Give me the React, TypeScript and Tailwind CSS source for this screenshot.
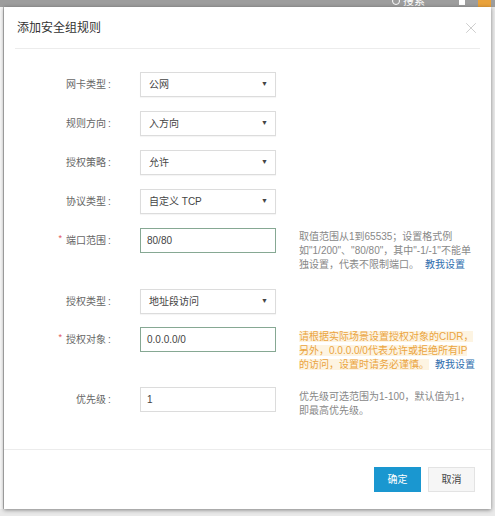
import { X } from "lucide-react";

const font = { fontFamily: '"Liberation Sans", "Noto Sans CJK SC", sans-serif' };

const Label = ({ text, required }: { text: string; required?: boolean }) => (
  <div className="w-[118px] shrink-0 h-[25px] flex items-center justify-end pr-[2px] text-[10px] text-[#666]">
    {required && <span className="text-[#e0535b] text-[9px] mr-[4px] -mt-[3px]">*</span>}
    <span>{text}</span>
    <span className="w-[14px] text-left pl-[2px]">:</span>
  </div>
);

const Select = ({ value }: { value: string }) => (
  <div className="ml-[18px] w-[136px] h-[25px] shrink-0 border border-[#dcdcdc] bg-white flex items-center justify-between pl-[8px] pr-[7px] text-[10px] text-[#444] shadow-[0_1px_1px_rgba(0,0,0,0.04)]">
    <span>{value}</span>
    <span className="text-[7px] text-[#444]">▼</span>
  </div>
);

const Input = ({ value, green }: { value: string; green?: boolean }) => (
  <div
    className={`ml-[18px] w-[136px] h-[25px] shrink-0 border bg-white flex items-center pl-[6px] text-[10px] text-[#444] ${
      green ? "border-[#86a893]" : "border-[#dcdcdc]"
    }`}
  >
    {value}
  </div>
);

export default function App() {
  return (
    <div className="relative w-[495px] h-[516px] bg-[#e9e9e9] overflow-hidden" style={font}>
      {/* page behind the dialog */}
      <div className="h-[7px] bg-[#9d9d9d] relative overflow-hidden">
        <div className="absolute right-[70px] top-[-5px] flex items-center gap-[3px] text-[11px] leading-[12px] text-white">
          <span className="w-[8px] h-[8px] rounded-full border border-white" />
          <span>搜索</span>
        </div>
        <div className="absolute right-[30px] top-[-4px] w-[6px] h-[9px] rounded-t-full bg-white" />
        <div className="absolute right-[4px] top-0 w-[13px] h-[7px] bg-[#e9a23b]" />
      </div>
      <div className="absolute left-0 top-[7px] w-[4px] h-[502px] bg-[#f7f7f7] border-r border-[#bdbdbd]" />

      {/* dialog */}
      <div className="absolute left-[4px] top-[7px] w-[487px] h-[502px] bg-white shadow-[0_1px_4px_rgba(0,0,0,0.45)] flex flex-col">
        <div className="h-[41px] flex items-center justify-between pl-[13px] pr-[11px]">
          <span className="text-[12px] text-[#333]">添加安全组规则</span>
          <X className="w-[18px] h-[18px] text-[#c4c4c4]" strokeWidth={1.1} />
        </div>
        <div className="mx-[11px] h-px bg-[#ececec]" />

        <div className="h-[400px] flex flex-col">
          <div className="flex mt-[23px]">
            <Label text="网卡类型" />
            <Select value="公网" />
          </div>
          <div className="flex mt-[14px]">
            <Label text="规则方向" />
            <Select value="入方向" />
          </div>
          <div className="flex mt-[14px]">
            <Label text="授权策略" />
            <Select value="允许" />
          </div>
          <div className="flex mt-[14px]">
            <Label text="协议类型" />
            <Select value="自定义 TCP" />
          </div>
          <div className="flex items-start mt-[14px]">
            <Label text="端口范围" required />
            <Input value="80/80" green />
            <p className="ml-[23px] mt-[2px] w-[178px] text-[10px] leading-[14px] text-[#888]">
              取值范围从1到65535；设置格式例如"1/200"、"80/80"，其中"-1/-1"不能单独设置，代表不限制端口。
              <span className="inline-block ml-[6px] text-[#2f6eae]">教我设置</span>
            </p>
          </div>
          <div className="flex mt-[17px]">
            <Label text="授权类型" />
            <Select value="地址段访问" />
          </div>
          <div className="flex items-start mt-[13px]">
            <Label text="授权对象" required />
            <Input value="0.0.0.0/0" green />
            <p className="ml-[23px] mt-[3px] w-[178px] text-[10px] leading-[14px] text-[#eba43e]">
              <span className="bg-[#fdf4e2]">请根据实际场景设置授权对象的CIDR，</span>
              <br />
              <span className="bg-[#fdf4e2]">另外，0.0.0.0/0代表允许或拒绝所有IP</span>
              <br />
              <span className="bg-[#fdf4e2]">的访问，设置时请务必谨慎。</span>
              <span className="inline-block ml-[6px] text-[#2f6eae]">教我设置</span>
            </p>
          </div>
          <div className="flex items-start mt-[15px]">
            <Label text="优先级" />
            <Input value="1" />
            <p className="ml-[23px] mt-[3px] w-[178px] text-[10px] leading-[14px] text-[#888]">
              优先级可选范围为1-100，默认值为1，即最高优先级。
            </p>
          </div>
        </div>

        <div className="h-px bg-[#ececec]" />
        <div className="flex-1 flex items-center justify-end gap-[7px] pr-[16px]">
          <button className="w-[47px] h-[25px] bg-[#1a97d0] text-white text-[10px]">确定</button>
          <button className="w-[47px] h-[25px] bg-[#f6f6f6] border border-[#e3e3e3] text-[#444] text-[10px]">
            取消
          </button>
        </div>
      </div>
    </div>
  );
}
